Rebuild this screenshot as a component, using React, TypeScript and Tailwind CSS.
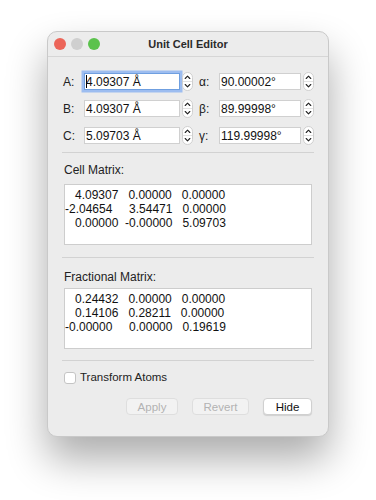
import React from 'react';

const font = { fontFamily: '"Liberation Sans", Arial, sans-serif' };

function Stepper() {
  return (
    <svg width="11" height="19" viewBox="0 0 11 19" className="shrink-0">
      <rect x="0.5" y="0.5" width="10" height="18" rx="5" fill="#ffffff" stroke="#cfcfcf" />
      <line x1="1" y1="9.5" x2="10" y2="9.5" stroke="#e2e2e2" />
      <path d="M3.2 6.5 L5.5 4.2 L7.8 6.5" fill="none" stroke="#222" strokeWidth="1.1" strokeLinecap="round" strokeLinejoin="round" />
      <path d="M3.2 12.5 L5.5 14.8 L7.8 12.5" fill="none" stroke="#222" strokeWidth="1.1" strokeLinecap="round" strokeLinejoin="round" />
    </svg>
  );
}

function Field({ label, value, width, labelWidth, focused }: { label: string; value: string; width: string; labelWidth: string; focused?: boolean }) {
  return (
    <div className="flex items-center">
      <span className={`${labelWidth} text-[12px] text-[#222]`}>{label}</span>
      <div
        className={`${width} h-[17px] bg-white flex items-center pl-[1px] text-[12px] text-[#111] border ${
          focused ? 'border-[#6f9fe0] ring-[2.5px] ring-[#9dbdf0]' : 'border-[#d0d0d0]'
        }`}
      >
        {focused && <span className="w-px h-[13px] bg-black -mr-px" />}
        {value}
      </div>
      <div className="ml-[2px]">
        <Stepper />
      </div>
    </div>
  );
}

function MatrixBox({ rows }: { rows: string[] }) {
  return (
    <div className="mx-[2px] h-[61px] bg-white border border-[#cdcdcd] pt-[3px]">
      {rows.map((r) => (
        <div key={r} className="whitespace-pre text-[12px] leading-[14px] text-[#111]">
          {r}
        </div>
      ))}
    </div>
  );
}

export default function App() {
  return (
    <div className="min-h-[500px] bg-white pt-[31px] pl-[47px]" style={font}>
      <div className="w-[282px] h-[406px] rounded-[10px] bg-[#ececec] border border-[#c9c9c9] shadow-[0_22px_40px_rgba(0,0,0,0.33)] overflow-hidden flex flex-col">
        {/* Title bar */}
        <div className="relative h-[25px] border-b border-[#d6d6d6] flex items-center justify-center shrink-0">
          <div className="absolute left-[6px] top-[6px] flex gap-[5px]">
            <span className="w-[12px] h-[12px] rounded-full bg-[#ec6559]" />
            <span className="w-[12px] h-[12px] rounded-full bg-[#cfcfcf]" />
            <span className="w-[12px] h-[12px] rounded-full bg-[#5bc24c]" />
          </div>
          <span className="text-[11px] font-bold text-[#2a2a2a]">Unit Cell Editor</span>
        </div>

        <div className="px-[14px] pt-[15px] flex flex-col">
          {/* Parameters */}
          <div className="grid grid-cols-[auto_auto] gap-x-[6px] gap-y-[8px] justify-between">
            <Field label="A:" value="4.09307 Å" width="w-[96px]" labelWidth="w-[22px] pl-[1px]" focused />
            <Field label="α:" value="90.00002°" width="w-[82px]" labelWidth="w-[20px]" />
            <Field label="B:" value="4.09307 Å" width="w-[96px]" labelWidth="w-[22px] pl-[1px]" />
            <Field label="β:" value="89.99998°" width="w-[82px]" labelWidth="w-[20px]" />
            <Field label="C:" value="5.09703 Å" width="w-[96px]" labelWidth="w-[22px] pl-[1px]" />
            <Field label="γ:" value="119.99998°" width="w-[82px]" labelWidth="w-[20px]" />
          </div>

          <div className="mt-[7px] h-px bg-[#d2d2d2]" />

          <div className="mt-[9px] ml-[2px] text-[12px] leading-[16px] text-[#222]">Cell Matrix:</div>
          <div className="mt-[6px]">
            <MatrixBox rows={['   4.09307   0.00000   0.00000', '-2.04654     3.54471   0.00000', '   0.00000  -0.00000   5.09703']} />
          </div>

          <div className="mt-[12px] h-px bg-[#d2d2d2]" />

          <div className="mt-[11px] ml-[2px] text-[12px] leading-[16px] text-[#222]">Fractional Matrix:</div>
          <div className="mt-[3px]">
            <MatrixBox rows={['   0.24432   0.00000   0.00000', '   0.14106   0.28211   0.00000', '-0.00000     0.00000   0.19619']} />
          </div>

          <div className="mt-[11px] h-px bg-[#d2d2d2]" />

          <label className="mt-[8px] ml-[2px] flex items-center gap-[4px]">
            <span className="w-[12px] h-[12px] rounded-[3px] bg-white border border-[#c4c4c4]" />
            <span className="text-[11.5px] text-[#222]">Transform Atoms</span>
          </label>

          <div className="mt-[12px] flex justify-end gap-[14px] mr-[2px]">
            <button className="w-[52px] h-[17px] rounded-[4px] bg-[#f2f2f2] border border-[#dedede] text-[11.5px] text-[#b3b3b3]">Apply</button>
            <button className="w-[57px] h-[17px] rounded-[4px] bg-[#f2f2f2] border border-[#dedede] text-[11.5px] text-[#b3b3b3]">Revert</button>
            <button className="w-[49px] h-[17px] rounded-[4px] bg-white border border-[#d0d0d0] shadow-[0_1px_1px_rgba(0,0,0,0.12)] text-[11.5px] text-[#111]">Hide</button>
          </div>
        </div>
      </div>
    </div>
  );
}
